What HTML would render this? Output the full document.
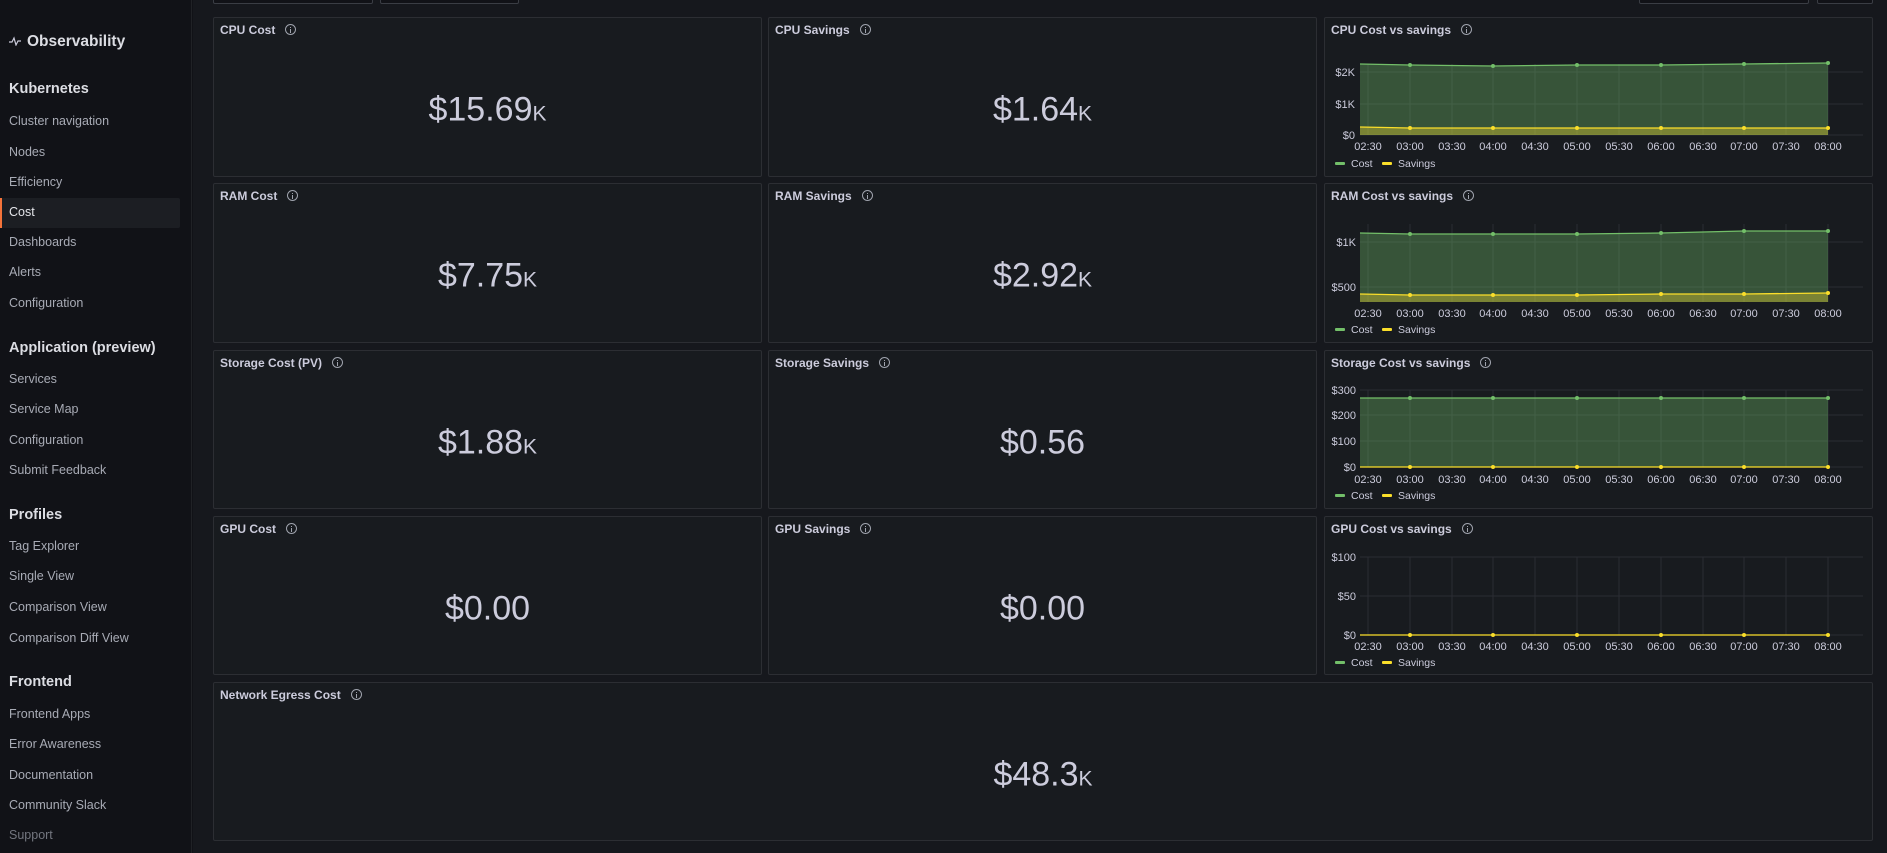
<!DOCTYPE html>
<html><head><meta charset="utf-8"><style>
*{margin:0;padding:0;box-sizing:border-box}
body{width:1887px;height:853px;overflow:hidden;background:#111217;font-family:"Liberation Sans",sans-serif;position:relative;color:#ccccdc}
.side{position:absolute;left:0;top:0;width:192px;height:853px;background:#111217;border-right:1px solid #202226}
.main{position:absolute;left:193px;top:0;width:1694px;height:853px;background:#16181d}
.si{position:absolute;left:9px;font-size:12.5px;color:#a8abb5;transform:translateY(-50%);white-space:nowrap}
.sh{position:absolute;left:9px;font-size:14.5px;font-weight:bold;color:#dcdde3;transform:translateY(-50%)}
.p{position:absolute;background:#181b1f;border:1px solid #2c2e33;border-radius:2px}
.t{position:absolute;left:6px;top:5px;font-size:12px;font-weight:bold;color:#ccccdc;white-space:nowrap}
.i{display:inline-block;width:11px;height:11px;border:1px solid #9fa3ad;border-radius:50%;margin-left:10px;vertical-align:-1px;position:relative}
.i:after{content:"";position:absolute;left:4px;top:4px;width:1px;height:4px;background:#9fa3ad}
.i:before{content:"";position:absolute;left:4px;top:2px;width:1px;height:1px;background:#9fa3ad}
.v{position:absolute;left:0;right:0;text-align:center;font-size:34px;color:#ccccdc;transform:translateY(-50%)}
.v small{font-size:21px}
.btn{position:absolute;top:-2px;height:6px;border:1px solid #3a3d44;background:#111217;border-radius:2px}
svg text{font-family:"Liberation Sans",sans-serif;font-size:11px;fill:#ccccdc}
</style></head><body>
<div class="side">
<div style="position:absolute;left:9px;top:42px;transform:translateY(-50%);font-size:15.5px;font-weight:bold;color:#dcdde3"><svg width="12" height="10" style="vertical-align:0;margin-right:6px"><path d="M0 6H3L5 2L7 9L9 5H12" stroke="#ccccdc" fill="none" stroke-width="1.2"/></svg>Observability</div>
<div class="sh" style="top:89px">Kubernetes</div>
<div class="si" style="top:121px">Cluster navigation</div>
<div class="si" style="top:152px">Nodes</div>
<div class="si" style="top:182px">Efficiency</div>
<div style="position:absolute;left:0;top:198px;width:180px;height:30px;background:#1c1e23;border-radius:2px"></div>
<div style="position:absolute;left:0;top:198px;width:2px;height:30px;background:#f5733a"></div>
<div class="si" style="top:212px;color:#e4e5ea">Cost</div>
<div class="si" style="top:242px">Dashboards</div>
<div class="si" style="top:272px">Alerts</div>
<div class="si" style="top:303px">Configuration</div>
<div class="sh" style="top:348px">Application (preview)</div>
<div class="si" style="top:379px">Services</div>
<div class="si" style="top:409px">Service Map</div>
<div class="si" style="top:440px">Configuration</div>
<div class="si" style="top:470px">Submit Feedback</div>
<div class="sh" style="top:515px">Profiles</div>
<div class="si" style="top:546px">Tag Explorer</div>
<div class="si" style="top:576px">Single View</div>
<div class="si" style="top:607px">Comparison View</div>
<div class="si" style="top:638px">Comparison Diff View</div>
<div class="sh" style="top:682px">Frontend</div>
<div class="si" style="top:714px">Frontend Apps</div>
<div class="si" style="top:744px">Error Awareness</div>
<div class="si" style="top:775px">Documentation</div>
<div class="si" style="top:805px">Community Slack</div>
<div class="si" style="top:835px;color:#73767f">Support</div>
</div>
<div class="main"></div>
<div class="btn" style="left:213px;width:160px"></div>
<div class="btn" style="left:380px;width:139px"></div>
<div class="btn" style="left:1639px;width:170px"></div>
<div class="btn" style="left:1817px;width:56px"></div>

<div class="p" style="left:213px;top:17px;width:549px;height:160px"><div class="t">CPU Cost<span class="i"></span></div><div class="v" style="top:92px">$15.69<small>K</small></div></div>
<div class="p" style="left:768px;top:17px;width:549px;height:160px"><div class="t">CPU Savings<span class="i"></span></div><div class="v" style="top:92px">$1.64<small>K</small></div></div>
<div class="p" style="left:213px;top:183px;width:549px;height:160px"><div class="t">RAM Cost<span class="i"></span></div><div class="v" style="top:92px">$7.75<small>K</small></div></div>
<div class="p" style="left:768px;top:183px;width:549px;height:160px"><div class="t">RAM Savings<span class="i"></span></div><div class="v" style="top:92px">$2.92<small>K</small></div></div>
<div class="p" style="left:213px;top:350px;width:549px;height:159px"><div class="t">Storage Cost (PV)<span class="i"></span></div><div class="v" style="top:92px">$1.88<small>K</small></div></div>
<div class="p" style="left:768px;top:350px;width:549px;height:159px"><div class="t">Storage Savings<span class="i"></span></div><div class="v" style="top:92px">$0.56</div></div>
<div class="p" style="left:213px;top:516px;width:549px;height:159px"><div class="t">GPU Cost<span class="i"></span></div><div class="v" style="top:92px">$0.00</div></div>
<div class="p" style="left:768px;top:516px;width:549px;height:159px"><div class="t">GPU Savings<span class="i"></span></div><div class="v" style="top:92px">$0.00</div></div>
<div class="p" style="left:213px;top:682px;width:1660px;height:159px"><div class="t">Network Egress Cost<span class="i"></span></div><div class="v" style="top:92px">$48.3<small>K</small></div></div>

<!-- CPU chart -->
<div class="p" style="left:1324px;top:17px;width:549px;height:160px"><div class="t">CPU Cost vs savings<span class="i"></span></div>
<svg width="549" height="160" style="position:absolute;left:0;top:0">
<g stroke="#2a2d33" stroke-width="1"><path d="M43 46V117M85 46V117M127 46V117M168 46V117M210 46V117M252 46V117M294 46V117M336 46V117M378 46V117M419 46V117M461 46V117M503 46V117M35 54H538M35 86H538M35 117H538"/></g>
<path d="M35 46L85 47L168 48L252 47L336 47L419 46L503 45V117H35Z" fill="#73bf69" fill-opacity="0.35"/>
<path d="M35 46L85 47L168 48L252 47L336 47L419 46L503 45" stroke="#73bf69" fill="none" stroke-width="1.3"/>
<path d="M35 109L85 110L503 110V117H35Z" fill="#fade2a" fill-opacity="0.35"/>
<path d="M35 109L85 110L503 110" stroke="#fade2a" fill="none" stroke-width="1.3"/>
<g fill="#73bf69"><circle cx="85" cy="47" r="2"/><circle cx="168" cy="48" r="2"/><circle cx="252" cy="47" r="2"/><circle cx="336" cy="47" r="2"/><circle cx="419" cy="46" r="2"/><circle cx="503" cy="45" r="2"/></g>
<g fill="#fade2a"><circle cx="85" cy="110" r="2"/><circle cx="168" cy="110" r="2"/><circle cx="252" cy="110" r="2"/><circle cx="336" cy="110" r="2"/><circle cx="419" cy="110" r="2"/><circle cx="503" cy="110" r="2"/></g>
<g text-anchor="end"><text x="30" y="58">$2K</text><text x="30" y="90">$1K</text><text x="30" y="121">$0</text></g>
<g text-anchor="middle"><text x="43" y="132">02:30</text><text x="85" y="132">03:00</text><text x="127" y="132">03:30</text><text x="168" y="132">04:00</text><text x="210" y="132">04:30</text><text x="252" y="132">05:00</text><text x="294" y="132">05:30</text><text x="336" y="132">06:00</text><text x="378" y="132">06:30</text><text x="419" y="132">07:00</text><text x="461" y="132">07:30</text><text x="503" y="132">08:00</text></g>
<rect x="10" y="144" width="10" height="3" rx="1" fill="#73bf69"/><text x="26" y="149" style="font-size:10.5px">Cost</text><rect x="57" y="144" width="10" height="3" rx="1" fill="#fade2a"/><text x="73" y="149" style="font-size:10.5px">Savings</text>
</svg></div>

<!-- RAM chart -->
<div class="p" style="left:1324px;top:183px;width:549px;height:160px"><div class="t">RAM Cost vs savings<span class="i"></span></div>
<svg width="549" height="160" style="position:absolute;left:0;top:0">
<g stroke="#2a2d33" stroke-width="1"><path d="M43 40V118M85 40V118M127 40V118M168 40V118M210 40V118M252 40V118M294 40V118M336 40V118M378 40V118M419 40V118M461 40V118M503 40V118M35 58H538M35 103H538"/></g>
<path d="M35 49L85 50L168 50L252 50L336 49L419 47L503 47V118H35Z" fill="#73bf69" fill-opacity="0.35"/>
<path d="M35 49L85 50L168 50L252 50L336 49L419 47L503 47" stroke="#73bf69" fill="none" stroke-width="1.3"/>
<path d="M35 110L85 111L252 111L336 110L419 110L503 109V118H35Z" fill="#fade2a" fill-opacity="0.35"/>
<path d="M35 110L85 111L252 111L336 110L419 110L503 109" stroke="#fade2a" fill="none" stroke-width="1.3"/>
<g fill="#73bf69"><circle cx="85" cy="50" r="2"/><circle cx="168" cy="50" r="2"/><circle cx="252" cy="50" r="2"/><circle cx="336" cy="49" r="2"/><circle cx="419" cy="47" r="2"/><circle cx="503" cy="47" r="2"/></g>
<g fill="#fade2a"><circle cx="85" cy="111" r="2"/><circle cx="168" cy="111" r="2"/><circle cx="252" cy="111" r="2"/><circle cx="336" cy="110" r="2"/><circle cx="419" cy="110" r="2"/><circle cx="503" cy="109" r="2"/></g>
<g text-anchor="end"><text x="31" y="62">$1K</text><text x="31" y="107">$500</text></g>
<g text-anchor="middle"><text x="43" y="133">02:30</text><text x="85" y="133">03:00</text><text x="127" y="133">03:30</text><text x="168" y="133">04:00</text><text x="210" y="133">04:30</text><text x="252" y="133">05:00</text><text x="294" y="133">05:30</text><text x="336" y="133">06:00</text><text x="378" y="133">06:30</text><text x="419" y="133">07:00</text><text x="461" y="133">07:30</text><text x="503" y="133">08:00</text></g>
<rect x="10" y="144" width="10" height="3" rx="1" fill="#73bf69"/><text x="26" y="149" style="font-size:10.5px">Cost</text><rect x="57" y="144" width="10" height="3" rx="1" fill="#fade2a"/><text x="73" y="149" style="font-size:10.5px">Savings</text>
</svg></div>

<!-- Storage chart -->
<div class="p" style="left:1324px;top:350px;width:549px;height:159px"><div class="t">Storage Cost vs savings<span class="i"></span></div>
<svg width="549" height="159" style="position:absolute;left:0;top:0">
<g stroke="#2a2d33" stroke-width="1"><path d="M43 39V116M85 39V116M127 39V116M168 39V116M210 39V116M252 39V116M294 39V116M336 39V116M378 39V116M419 39V116M461 39V116M503 39V116M35 39H538M35 64H538M35 90H538M35 116H538"/></g>
<path d="M35 47L503 47V116H35Z" fill="#73bf69" fill-opacity="0.35"/>
<path d="M35 47L503 47" stroke="#73bf69" fill="none" stroke-width="1.3"/>
<path d="M35 116L503 116" stroke="#fade2a" fill="none" stroke-width="1.3"/>
<g fill="#73bf69"><circle cx="85" cy="47" r="2"/><circle cx="168" cy="47" r="2"/><circle cx="252" cy="47" r="2"/><circle cx="336" cy="47" r="2"/><circle cx="419" cy="47" r="2"/><circle cx="503" cy="47" r="2"/></g>
<g fill="#fade2a"><circle cx="85" cy="116" r="2"/><circle cx="168" cy="116" r="2"/><circle cx="252" cy="116" r="2"/><circle cx="336" cy="116" r="2"/><circle cx="419" cy="116" r="2"/><circle cx="503" cy="116" r="2"/></g>
<g text-anchor="end"><text x="31" y="43">$300</text><text x="31" y="68">$200</text><text x="31" y="94">$100</text><text x="31" y="120">$0</text></g>
<g text-anchor="middle"><text x="43" y="132">02:30</text><text x="85" y="132">03:00</text><text x="127" y="132">03:30</text><text x="168" y="132">04:00</text><text x="210" y="132">04:30</text><text x="252" y="132">05:00</text><text x="294" y="132">05:30</text><text x="336" y="132">06:00</text><text x="378" y="132">06:30</text><text x="419" y="132">07:00</text><text x="461" y="132">07:30</text><text x="503" y="132">08:00</text></g>
<rect x="10" y="143" width="10" height="3" rx="1" fill="#73bf69"/><text x="26" y="148" style="font-size:10.5px">Cost</text><rect x="57" y="143" width="10" height="3" rx="1" fill="#fade2a"/><text x="73" y="148" style="font-size:10.5px">Savings</text>
</svg></div>

<!-- GPU chart -->
<div class="p" style="left:1324px;top:516px;width:549px;height:159px"><div class="t">GPU Cost vs savings<span class="i"></span></div>
<svg width="549" height="159" style="position:absolute;left:0;top:0">
<g stroke="#2a2d33" stroke-width="1"><path d="M43 40V118M85 40V118M127 40V118M168 40V118M210 40V118M252 40V118M294 40V118M336 40V118M378 40V118M419 40V118M461 40V118M503 40V118M35 40H538M35 79H538M35 118H538"/></g>
<path d="M35 118L503 118" stroke="#fade2a" fill="none" stroke-width="1.3"/>
<g fill="#fade2a"><circle cx="85" cy="118" r="2"/><circle cx="168" cy="118" r="2"/><circle cx="252" cy="118" r="2"/><circle cx="336" cy="118" r="2"/><circle cx="419" cy="118" r="2"/><circle cx="503" cy="118" r="2"/></g>
<g text-anchor="end"><text x="31" y="44">$100</text><text x="31" y="83">$50</text><text x="31" y="122">$0</text></g>
<g text-anchor="middle"><text x="43" y="133">02:30</text><text x="85" y="133">03:00</text><text x="127" y="133">03:30</text><text x="168" y="133">04:00</text><text x="210" y="133">04:30</text><text x="252" y="133">05:00</text><text x="294" y="133">05:30</text><text x="336" y="133">06:00</text><text x="378" y="133">06:30</text><text x="419" y="133">07:00</text><text x="461" y="133">07:30</text><text x="503" y="133">08:00</text></g>
<rect x="10" y="144" width="10" height="3" rx="1" fill="#73bf69"/><text x="26" y="149" style="font-size:10.5px">Cost</text><rect x="57" y="144" width="10" height="3" rx="1" fill="#fade2a"/><text x="73" y="149" style="font-size:10.5px">Savings</text>
</svg></div>
</body></html>
